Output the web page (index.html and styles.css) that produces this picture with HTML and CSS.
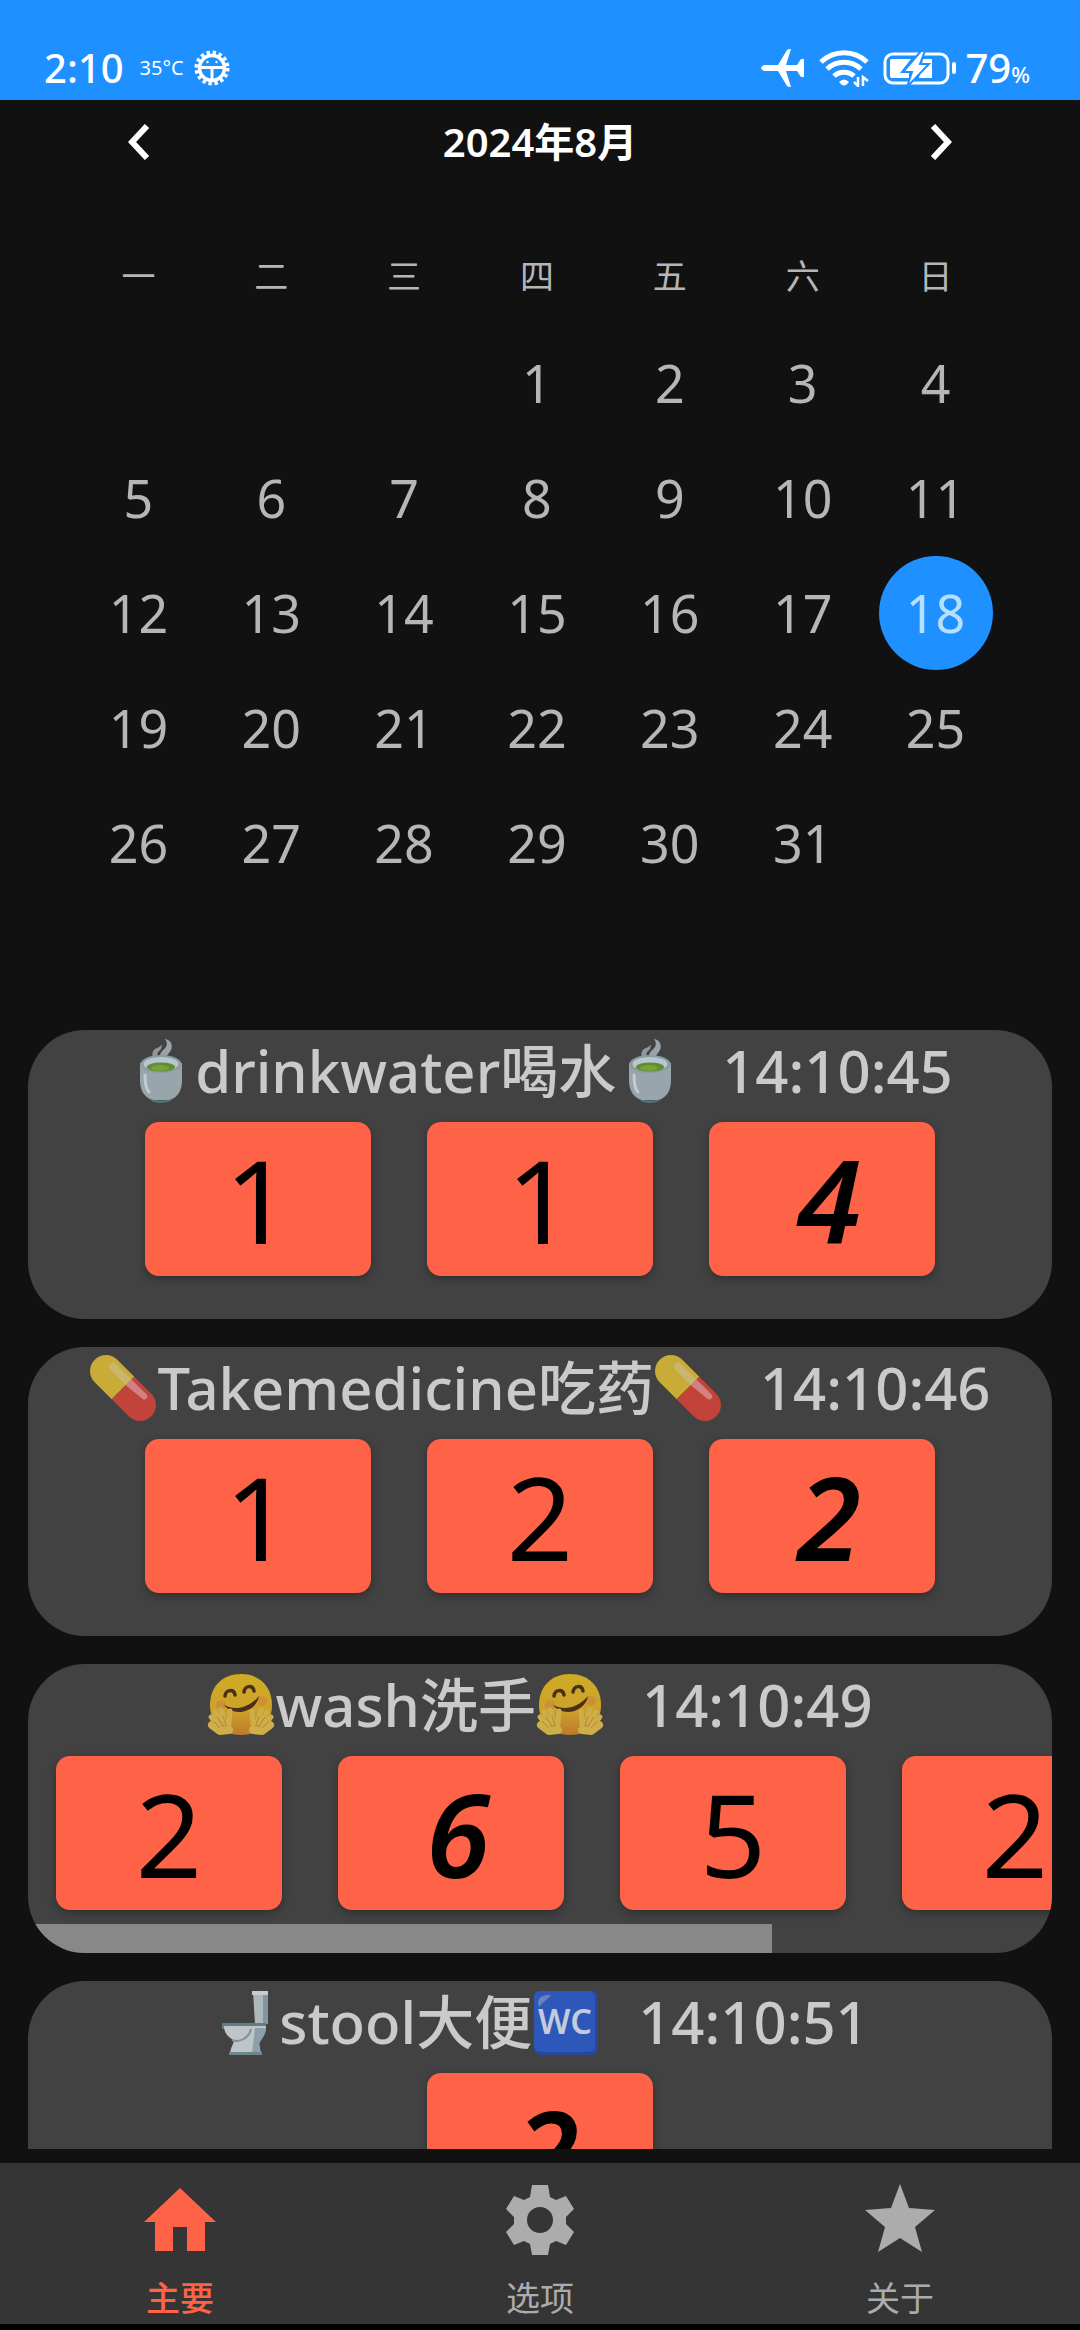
FILE: index.html
```html
<!DOCTYPE html>
<html lang="zh-CN">
<head>
<meta charset="utf-8">
<meta name="viewport" content="width=device-width, initial-scale=1">
<title>2024年8月</title>
<link rel="stylesheet" href="styles.css">
</head>
<body>
<svg class="sprite" width="0" height="0" aria-hidden="true">
  <symbol id="tea" viewBox="0 0 68 68">
    <path d="M26 21c-2-6 1-9 4-10 4-1 3-3 5-3-1 3 0 4-3 6-2 2-2 4-1 7z" fill="#8f989e"/>
    <path d="M33 21c-1-6 4-8 6-11 2-4 0-6-1-8 6 1 8 6 6 11-2 4-5 5-4 8z" fill="#9aa3a9"/>
    <path d="M13 26v18c0 13 8 18 13 19h16c5-1 13-6 13-19V26z" fill="#98a5aa"/>
    <path d="M23 62c2 5 20 5 22 0-6 2-16 2-22 0z" fill="#53797b"/>
    <ellipse cx="34" cy="27" rx="20.500" ry="9" fill="#8b9ba2"/>
    <ellipse cx="34" cy="27" rx="17.500" ry="7" fill="#b6c7d0"/>
    <ellipse cx="34" cy="30" rx="14" ry="4.500" fill="#5f8d30"/>
    <ellipse cx="33" cy="31" rx="9" ry="3" fill="#76a23b"/>
    <path d="M18 38c0 9 1 14 4 17" stroke="#c3cdd1" stroke-width="3" fill="none" stroke-linecap="round"/>
  </symbol>
  <symbol id="pill" viewBox="0 0 68 68">
    <g transform="rotate(45 34 34)">
      <path d="M34 18H10a16 16 0 0 0 0 32h24z" fill="#c9ac37"/>
      <path d="M34 18h24a16 16 0 0 1 0 32H34z" fill="#c1433a"/>
      <path d="M34 22H12a4 4 0 0 0 0 8h22z" fill="#c9b66d"/>
      <path d="M34 22h21a3 3 0 0 1 0 6l-21 2z" fill="#d28083"/>
    </g>
  </symbol>
  <symbol id="hug" viewBox="0 0 68 68">
    <defs>
      <linearGradient id="skin" x1="0" y1="0" x2="0" y2="1">
        <stop offset="0" stop-color="#cfac25"/><stop offset=".6" stop-color="#cda12a"/><stop offset="1" stop-color="#bd792c"/>
      </linearGradient>
    </defs>
    <path d="M34 3C16 3 3 15 3 34c0 18 12 30 31 30s31-12 31-30C65 15 52 3 34 3z" fill="url(#skin)"/>
    <circle cx="14" cy="34" r="5" fill="#c9873d" opacity=".6"/><circle cx="55" cy="30" r="5" fill="#c9873d" opacity=".6"/>
    <path d="M18 25c1-7 9-7 10-1M37 21c1-7 9-7 10-1" stroke-width="3.500" fill="none" stroke="#493016" stroke-linecap="round"/>
    <path d="M17 34c11 6 25 3 35-9-3 17-26 21-35 9z" fill="#493016"/>
    <g id="palm" fill="none" stroke="#cdae48" stroke-width="5" stroke-linecap="round">
      <path d="M12 56L4 46M14 53L8 41M18 52l-4-13M22 53l1-13"/>
      <path d="M5 54l8 6 9-1" stroke-width="8" stroke-linejoin="round"/>
    </g>
    <path d="M6 50l7 7m-3-11l6 9m0-10l3 9" stroke="#b5833a" fill="none"/>
    <use href="#palm" transform="translate(68 0) scale(-1 1)"/>
    <path d="M62 50l-7 7m3-11l-6 9m0-10l-3 9" stroke="#b5833a" fill="none"/>
  </symbol>
</svg>

<div class="app">
  <header class="status">
    <div class="status-group">
      <span class="clock">2:10</span>
      <span class="temp">35°C</span>
      <svg class="sun" viewBox="0 0 36 36" width="36" height="36" aria-hidden="true">
        <circle cx="18" cy="18" r="15.500" fill="none" stroke="#fff" stroke-width="4" stroke-dasharray="3.400 2.700"/>
        <circle cx="18" cy="18" r="12.500" fill="none" stroke="#fff" stroke-width="3.500"/>
        <path d="M7 17.500h22M18 18v12" stroke="#fff" stroke-width="3"/>
        <circle cx="13.500" cy="12" r="1.200" fill="#fff"/><circle cx="22.500" cy="12" r="1.200" fill="#fff"/>
      </svg>
    </div>
    <div class="status-group">
      <svg viewBox="0 0 44 38" width="44" height="38" aria-hidden="true">
        <path d="M3 16h14L26 1q1-1 4-1l-5 16h11l4-6h3v18h-3l-4-6H25l5 16q-3 0-4-1L17 22H3q-6-3 0-6z" fill="#fff"/>
      </svg>
      <svg class="wifi" viewBox="0 0 50 38" width="50" height="38" aria-hidden="true">
        <g fill="none" stroke="#fff" stroke-width="5">
          <path d="M2 13a33 33 0 0 1 46 0M8 20a25 25 0 0 1 34 0M15 27a15 15 0 0 1 20 0"/>
        </g>
        <path d="M20 33q5-5 10 0-5 7-10 0z" fill="#fff"/>
        <path d="M39 28v9l-4-4M44 37v-9l5 4" fill="none" stroke="#fff" stroke-width="2.500"/>
      </svg>
      <svg class="battery" viewBox="0 0 74 34" width="74" height="34" aria-hidden="true">
        <rect x="2" y="3" width="63" height="29" rx="8" fill="none" stroke="#fff" stroke-width="3"/>
        <path d="M7 10q0-2 2-2h19L17 22h9v5H9q-2 0-2-2zM40 8h9v19H36z" fill="#fff"/>
        <path d="M38 0L20 21h9l-5 15 22-23h-9l5-13z" fill="#fff" stroke="#1e90ff" stroke-width="2"/>
        <rect x="69" y="11" width="4" height="12" rx="2" fill="#fff"/>
      </svg>
      <span class="charge">79<small>%</small></span>
    </div>
  </header>

  <main class="main">
    <section class="calendar">
      <div class="month">
        <button class="step" type="button" aria-label="上个月"><svg viewBox="0 0 22 36" width="22" height="36"><path d="M19 2L4 18l15 16" fill="none" stroke="#fff" stroke-width="6"/></svg></button>
        <h1>2024年8月</h1>
        <button class="step" type="button" aria-label="下个月"><svg viewBox="0 0 22 36" width="22" height="36"><path d="M3 2l15 16L3 34" fill="none" stroke="#fff" stroke-width="6"/></svg></button>
      </div>
      <table class="days">
        <thead><tr><th>一</th><th>二</th><th>三</th><th>四</th><th>五</th><th>六</th><th>日</th></tr></thead>
        <tbody>
          <tr><td></td><td></td><td></td><td><button>1</button></td><td><button>2</button></td><td><button>3</button></td><td><button>4</button></td></tr>
          <tr><td><button>5</button></td><td><button>6</button></td><td><button>7</button></td><td><button>8</button></td><td><button>9</button></td><td><button>10</button></td><td><button>11</button></td></tr>
          <tr><td><button>12</button></td><td><button>13</button></td><td><button>14</button></td><td><button>15</button></td><td><button>16</button></td><td><button>17</button></td><td><button class="today">18</button></td></tr>
          <tr><td><button>19</button></td><td><button>20</button></td><td><button>21</button></td><td><button>22</button></td><td><button>23</button></td><td><button>24</button></td><td><button>25</button></td></tr>
          <tr><td><button>26</button></td><td><button>27</button></td><td><button>28</button></td><td><button>29</button></td><td><button>30</button></td><td><button>31</button></td><td></td></tr>
        </tbody>
      </table>
    </section>

    <section class="list">
      <article class="card">
        <h2><svg class="emoji"><use href="#tea"/></svg><span>drinkwater喝水</span><svg class="emoji"><use href="#tea"/></svg><time>14:10:45</time></h2>
        <div class="counts"><button>1</button><button>1</button><button class="latest">4</button></div>
      </article>
      <article class="card">
        <h2><svg class="emoji"><use href="#pill"/></svg><span>Takemedicine吃药</span><svg class="emoji"><use href="#pill"/></svg><time>14:10:46</time></h2>
        <div class="counts"><button>1</button><button>2</button><button class="latest">2</button></div>
      </article>
      <article class="card">
        <h2><svg class="emoji"><use href="#hug"/></svg><span>wash洗手</span><svg class="emoji"><use href="#hug"/></svg><time>14:10:49</time></h2>
        <div class="counts scrolling"><button>2</button><button class="latest">6</button><button>5</button><button>2</button></div>
        <div class="thumb" style="width: 72.660%"></div>
      </article>
      <article class="card">
        <h2>
          <svg class="emoji" viewBox="0 0 68 68" aria-hidden="true">
            <path d="M42 3h15v33H44z" fill="#adb8bb"/>
            <path d="M52 3h5v33h-5z" fill="#8198a2"/>
            <path d="M41 3h16v4H41z" fill="#c4cccf"/>
            <path d="M11 35h44v6H11z" fill="#5e7f8a"/>
            <path d="M13 38h42c0 8-6 12-7 17l2 11H19c1-9 5-11 3-14-6-4-9-8-9-14z" fill="#bfc5c7"/>
            <path d="M44 40h11c0 8-6 12-7 17l2 9h-9z" fill="#8ba0a8"/>
            <path d="M21 52c8 3 17-2 19-11" stroke="#7e9299" stroke-width="2" fill="none"/>
            <path d="M18 64h33v3H18z" fill="#6c868e"/>
          </svg>
          <span>stool大便</span>
          <svg class="emoji" viewBox="0 0 68 68">
            <rect x="2" y="3" width="64" height="64" rx="6" fill="#28489f"/>
            <rect x="2" y="3" width="61" height="61" rx="6" fill="#2d58b9"/>
            <path d="M6 15c1-7 5-8 13-8-4 5-8 7-12 12z" fill="#6883c0"/>
            <text x="33" y="46" text-anchor="middle" class="wc-text">WC</text>
          </svg>
          <time>14:10:51</time>
        </h2>
        <div class="counts"><button class="latest">2</button></div>
      </article>
    </section>
  </main>

  <nav class="tabs">
    <a class="tab active" href="#main"><svg viewBox="0 0 72 72" width="72" height="72" aria-hidden="true"><path d="M36 4L0 38h11v29h18V43h14v24h18V38h11z" fill="currentColor"/></svg><span>主要</span></a>
    <a class="tab" href="#options"><svg viewBox="0 0 72 72" width="72" height="72" aria-hidden="true"><path fill-rule="evenodd" fill="currentColor" d="M28 1h16l2 12 6 3 10-4 8 13-8 8v7l8 8-8 13-10-4-6 3-2 11H28l-2-11-6-3-10 4-8-13 8-8v-7l-8-8 8-13 10 4 6-3zM36 23a13 13 0 1 0 0 26 13 13 0 0 0 0-26z"/></svg><span>选项</span></a>
    <a class="tab" href="#about"><svg viewBox="0 0 72 72" width="72" height="72" aria-hidden="true"><path d="M36 0l9 24 26 2-20 17 7 25-22-14-22 14 7-25L1 26l26-2z" fill="currentColor"/></svg><span>关于</span></a>
  </nav>
</div>
</body>
</html>
```

FILE: styles.css
```css
* { box-sizing: border-box; }

body {
  margin: 0;
  background: #000;
  color: #b6b6b6;
  font-family: "Noto Sans", "Noto Sans CJK SC", sans-serif;
}

button {
  padding: 0;
  border: 0;
  background: none;
  color: inherit;
  font: inherit;
}

.sprite { position: absolute; }

.app {
  display: flex;
  flex-direction: column;
  height: 100vh;
  padding-bottom: 6px;
}

/* status bar */
.status {
  display: flex;
  justify-content: space-between;
  align-items: flex-end;
  height: 100px;
  flex: none;
  padding: 0 50px 12px 44px;
  background: #1e90ff;
  color: #fff;
}

.status-group {
  display: flex;
  align-items: center;
  height: 40px;
}

.clock, .charge {
  font-size: 40px;
  line-height: 40px;
  font-weight: 500;
}

.charge {
  display: flex;
  align-items: baseline;
  margin-left: 8px;
}

.charge small {
  font-size: 22px;
  line-height: 24px;
}

.temp {
  margin-left: 16px;
  font-size: 20px;
  line-height: 40px;
}

.sun { margin-left: 10px; }
.wifi { margin-left: 14px; }
.battery { margin-left: 14px; }

/* calendar */
.main {
  display: flex;
  flex-direction: column;
  flex: 1;
  min-height: 0;
  padding-bottom: 14px;
  background: #111;
}

.month {
  display: flex;
  justify-content: space-between;
  align-items: center;
  height: 84px;
  padding: 0 128px;
  color: #fff;
}

.month h1 {
  margin: 0;
  font-size: 40px;
  line-height: 48px;
  font-weight: 600;
}

.step {
  display: flex;
}

.calendar {
  flex: none;
  padding-bottom: 130px;
}

.days {
  width: calc(100% - 150px);
  margin: 0 78px 0 72px;
  border-collapse: collapse;
  table-layout: fixed;
}

.days th {
  height: 141px;
  padding: 42px 0 0;
  font-size: 34px;
  line-height: 48px;
  font-weight: 400;
}

.days td {
  height: 115px;
  padding: 0;
  text-align: center;
}

.days button {
  display: block;
  width: 114px;
  height: 114px;
  margin: 0 auto;
  border-radius: 50%;
  font-size: 52px;
  line-height: 114px;
}

.days .today {
  background: #1e90ff;
  color: #b5e1ff;
}

/* reminder cards */
.list {
  display: flex;
  flex-direction: column;
  gap: 28px;
  flex: 1;
  min-height: 0;
  padding: 0 28px;
  overflow: hidden;
}

.card {
  flex: none;
  height: 289px;
  overflow: hidden;
  border-radius: 57px;
  background: #424242;
}

.card h2 {
  display: flex;
  justify-content: center;
  align-items: center;
  height: 82px;
  margin: 0 0 10px;
  color: #cacaca;
  font-size: 58px;
  line-height: 80px;
  font-weight: 500;
  white-space: nowrap;
}

.card time { margin-left: 38px; }

.emoji {
  flex: none;
  width: 68px;
  height: 68px;
}

.wc-text {
  fill: #c3cbdc;
  font: 600 34px "Noto Sans", sans-serif;
}

.counts {
  display: flex;
  justify-content: center;
  gap: 56px;
  padding: 0 28px;
}

.counts button {
  flex: none;
  width: 226px;
  height: 154px;
  border-radius: 14px;
  background: #ff6347;
  box-shadow: 0 3px 8px rgba(0, 0, 0, 0.3);
  color: #000;
  font-size: 116px;
  line-height: 154px;
}

.counts .latest {
  padding-left: 14px;
  font-style: italic;
  font-weight: 600;
}

.scrolling { justify-content: flex-start; }

.thumb {
  height: 29px;
  margin-top: 14px;
  background: #888;
}

/* bottom tabs */
.tabs {
  display: flex;
  flex: none;
  height: 161px;
  background: #353535;
}

.tab {
  display: flex;
  flex-direction: column;
  align-items: center;
  flex: 1;
  padding-top: 21px;
  color: #acacac;
  font-size: 34px;
  line-height: 48px;
  text-decoration: none;
}

.tab span { margin-top: 18px; }

.tab.active {
  color: #ff6347;
  font-weight: 500;
}
```
